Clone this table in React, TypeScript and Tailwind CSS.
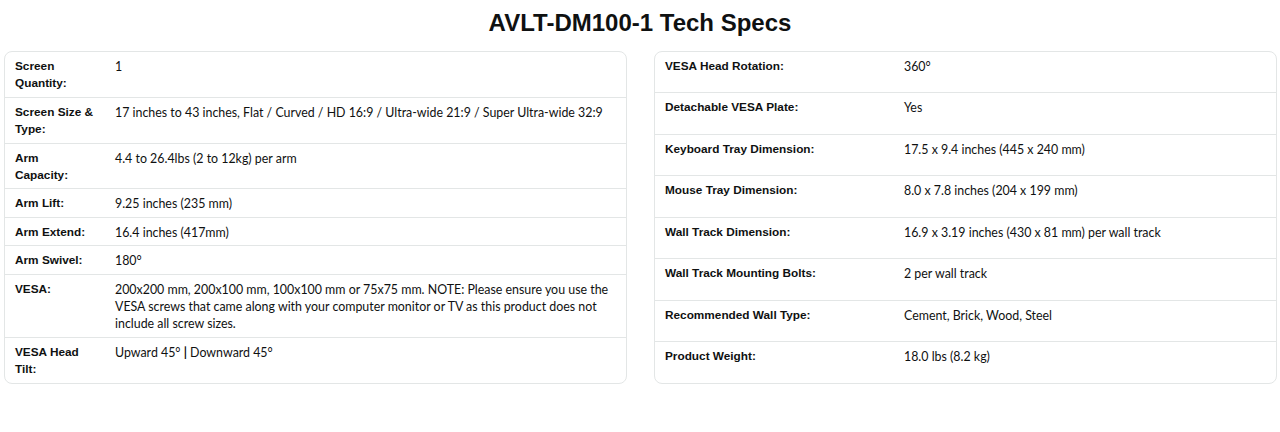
import React from 'react';

type Spec = { label: string; value: React.ReactNode };

const leftSpecs: Spec[] = [
  { label: 'Screen Quantity:', value: '1' },
  {
    label: 'Screen Size & Type:',
    value: '17 inches to 43 inches, Flat / Curved / HD 16:9 / Ultra-wide 21:9 / Super Ultra-wide 32:9',
  },
  { label: 'Arm\nCapacity:', value: '4.4 to 26.4lbs (2 to 12kg) per arm' },
  { label: 'Arm Lift:', value: '9.25 inches (235 mm)' },
  { label: 'Arm Extend:', value: '16.4 inches (417mm)' },
  { label: 'Arm Swivel:', value: '180°' },
  {
    label: 'VESA:',
    value:
      '200x200 mm, 200x100 mm, 100x100 mm or 75x75 mm. NOTE: Please ensure you use the VESA screws that came along with your computer monitor or TV as this product does not include all screw sizes.',
  },
  {
    label: 'VESA Head Tilt:',
    value: (
      <>
        Upward 45° <span className="font-bold">|</span> Downward 45°
      </>
    ),
  },
];

const rightSpecs: Spec[] = [
  { label: 'VESA Head Rotation:', value: '360°' },
  { label: 'Detachable VESA Plate:', value: 'Yes' },
  { label: 'Keyboard Tray Dimension:', value: '17.5 x 9.4 inches (445 x 240 mm)' },
  { label: 'Mouse Tray Dimension:', value: '8.0 x 7.8 inches (204 x 199 mm)' },
  { label: 'Wall Track Dimension:', value: '16.9 x 3.19 inches (430 x 81 mm) per wall track' },
  { label: 'Wall Track Mounting Bolts:', value: '2 per wall track' },
  { label: 'Recommended Wall Type:', value: 'Cement, Brick, Wood, Steel' },
  { label: 'Product Weight:', value: '18.0 lbs (8.2 kg)' },
];

const labelFont = 'font-["Liberation_Sans",Arial,sans-serif] font-bold text-[11.8px] whitespace-pre-line';
const valueFont = 'font-[Lato,sans-serif] text-[12.4px]';

export default function App() {
  return (
    <div className="w-[1280px] h-[432px] bg-white text-[#0f1111]">
      <h2 className='pt-[9px] text-center font-["Liberation_Sans",Arial,sans-serif] text-[24px] font-bold leading-[28px]'>
        AVLT-DM100-1 Tech Specs
      </h2>

      <div className="mt-[14px] flex gap-[27px] pl-[4px]">
        {/* Left table: rows size to content */}
        <div className="w-[623px] overflow-hidden rounded-lg border border-[#e3e6e6]">
          {leftSpecs.map((s, i) => (
            <div
              key={s.label}
              className={`flex pt-[6px] pb-[4px] leading-[17.4px] ${
                i < leftSpecs.length - 1 ? 'border-b border-[#e3e6e6]' : ''
              }`}
            >
              <div className={`w-[100px] shrink-0 px-[10px] ${labelFont}`}>{s.label}</div>
              <div className={`flex-1 px-[10px] ${valueFont}`}>{s.value}</div>
            </div>
          ))}
        </div>

        {/* Right table: rows stretch to the left table's height */}
        <div className="flex w-[623px] flex-col overflow-hidden rounded-lg border border-[#e3e6e6]">
          {rightSpecs.map((s, i) => (
            <div
              key={s.label}
              className={`flex flex-1 pt-[6px] pb-[4px] leading-[17.4px] ${
                i < rightSpecs.length - 1 ? 'border-b border-[#e3e6e6]' : ''
              }`}
            >
              <div className={`w-[239px] shrink-0 px-[10px] ${labelFont}`}>{s.label}</div>
              <div className={`flex-1 px-[10px] ${valueFont}`}>{s.value}</div>
            </div>
          ))}
        </div>
      </div>
    </div>
  );
}
